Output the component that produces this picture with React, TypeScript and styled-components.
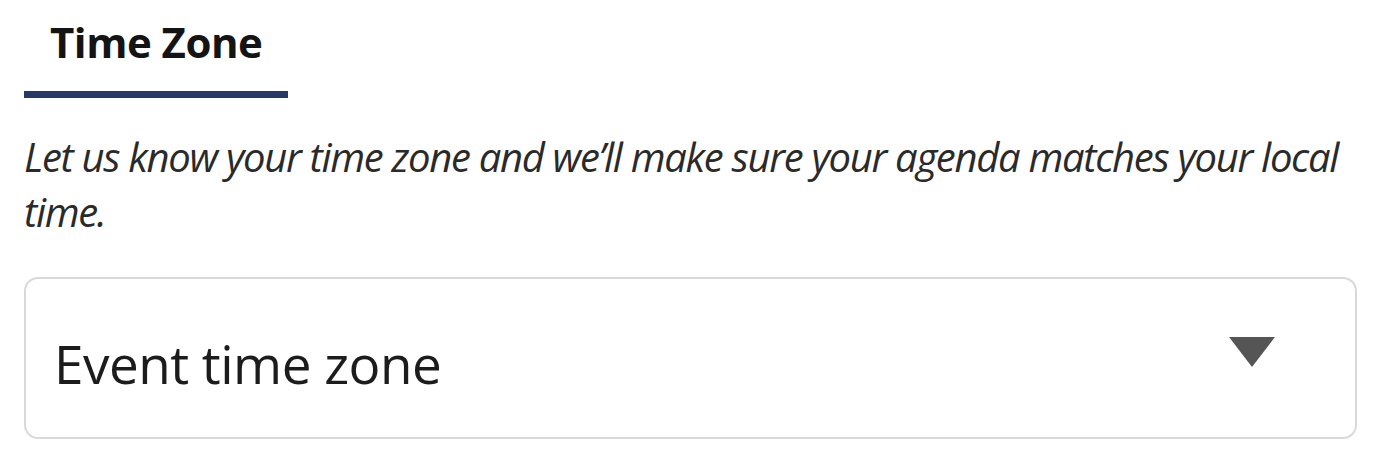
import React from 'react';
import styled, { createGlobalStyle } from 'styled-components';

const GlobalStyle = createGlobalStyle`
  html, body {
    margin: 0;
    padding: 0;
    background: #ffffff;
  }
  body {
    font-family: 'Open Sans', 'Noto Sans', sans-serif;
    color: #1a1a1a;
  }
`;

const Page = styled.div`
  display: flex;
  flex-direction: column;
  width: 1376px;
  height: 474px;
  box-sizing: border-box;
  padding: 14px 19px 0 24px;
  background: #ffffff;
`;

const TabBar = styled.div`
  display: flex;
`;

const Tab = styled.div`
  width: 264px;
  box-sizing: border-box;
  padding: 0 0 21px 26px;
  border-bottom: 7px solid #263a68;
  font-size: 42px;
  font-weight: 700;
  line-height: 56px;
  letter-spacing: -0.5px;
  color: #141414;
`;

const Description = styled.p`
  margin: 31px 0 0;
  font-size: 40px;
  font-style: italic;
  line-height: 55px;
  letter-spacing: -1.3px;
  color: #2a2a2a;
`;

const Select = styled.div`
  display: flex;
  align-items: center;
  justify-content: space-between;
  margin-top: 38px;
  height: 162px;
  box-sizing: border-box;
  padding: 0 80px 0 28px;
  border: 2px solid #d9d9d9;
  border-radius: 14px;
  cursor: pointer;
`;

const SelectValue = styled.span`
  margin-top: 10px;
  font-size: 53px;
  line-height: 1;
  letter-spacing: -0.5px;
  color: #1c1c1c;
`;

const Caret = () => (
  <svg width="46" height="30" viewBox="0 0 46 30" style={{ marginTop: -12 }}>
    <path d="M0 0 H46 L23 30 Z" fill="#555555" />
  </svg>
);

const App: React.FC = () => {
  return (
    <>
      <GlobalStyle />
      <Page>
        <TabBar>
          <Tab>Time Zone</Tab>
        </TabBar>
        <Description>
          Let us know your time zone and we’ll make sure your agenda matches your local time.
        </Description>
        <Select>
          <SelectValue>Event time zone</SelectValue>
          <Caret />
        </Select>
      </Page>
    </>
  );
};

export default App;
